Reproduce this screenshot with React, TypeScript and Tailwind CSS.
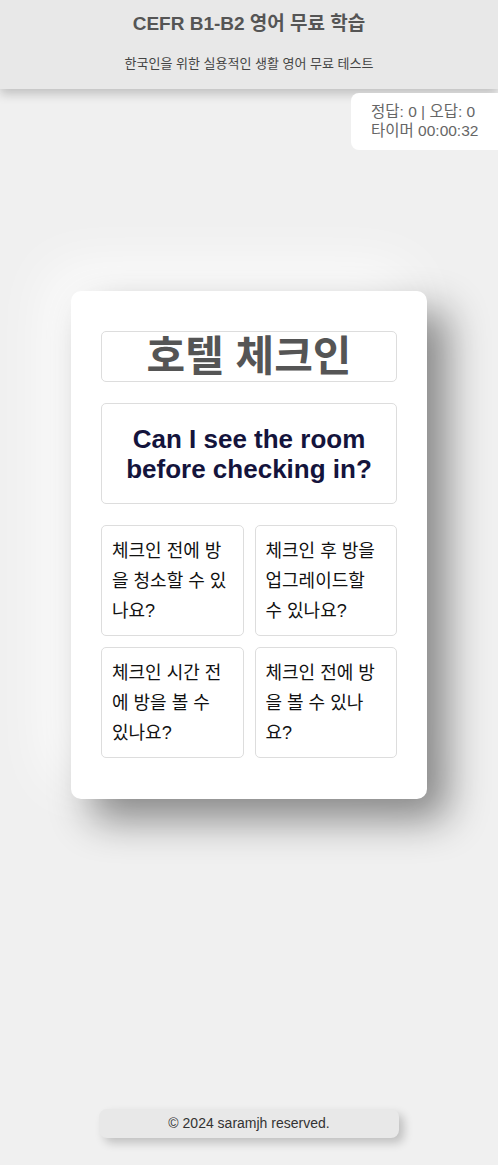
import React from "react";

export default function App() {
  const options = [
    "체크인 전에 방을 청소할 수 있나요?",
    "체크인 후 방을 업그레이드할 수 있나요?",
    "체크인 시간 전에 방을 볼 수 있나요?",
    "체크인 전에 방을 볼 수 있나요?",
  ];
  return (
    <div className="relative min-h-[1165px] flex flex-col bg-[#f0f0f0] font-['Liberation_Sans','Noto_Sans_CJK_KR',sans-serif]">
      <header className="relative z-10 h-[89px] bg-[#e8e8e8] shadow-[0_5px_10px_rgba(0,0,0,0.2)] flex flex-col items-center">
        <h1 className="mt-[12px] text-[19px] leading-[24px] font-bold text-[#555]">CEFR B1-B2 영어 무료 학습</h1>
        <p className="mt-[19px] text-[13px] leading-[18px] text-[#444]">한국인을 위한 실용적인 생활 영어 무료 테스트</p>
      </header>

      <div className="absolute right-0 top-[93px] z-20 w-[147px] h-[57px] bg-white rounded-l-[8px] pl-[20px] pt-[9px] text-[15.5px] leading-[19px] text-[#666]">
        <div>정답: 0 | 오답: 0</div>
        <div>타이머 00:00:32</div>
      </div>

      <main className="flex justify-center pt-[202px]">
        <div className="w-[356px] bg-white rounded-[10px] px-[30px] pt-[40px] pb-[41px] shadow-[20px_20px_40px_rgba(0,0,0,0.45),-20px_-20px_60px_#ffffff] flex flex-col gap-[21px]">
          <div className="h-[51px] border border-[#dddddd] rounded-[5px] flex items-center justify-center">
            <span className="text-[42px] leading-[50px] font-bold text-[#555]">호텔 체크인</span>
          </div>
          <div className="h-[101px] border border-[#dddddd] rounded-[5px] flex items-center justify-center text-center px-[10px]">
            <span className="text-[26px] leading-[30px] font-bold text-[#14143c]">Can I see the room<br />before checking in?</span>
          </div>
          <div className="grid grid-cols-2 gap-[11px]">
            {options.map((o, i) => (
              <div key={i} className="h-[111px] border border-[#dddddd] rounded-[5px] pl-[10px] pr-[13px] py-[10px] text-[18px] leading-[30px] text-[#111] break-all">
                {o}
              </div>
            ))}
          </div>
        </div>
      </main>

      <footer className="mt-auto mb-[27px] flex justify-center">
        <div className="w-[300px] h-[29px] bg-[#e8e8e8] rounded-[8px] shadow-[5px_5px_10px_rgba(0,0,0,0.2)] flex items-center justify-center text-[14px] text-[#333]">
          © 2024 saramjh reserved.
        </div>
      </footer>
    </div>
  );
}
